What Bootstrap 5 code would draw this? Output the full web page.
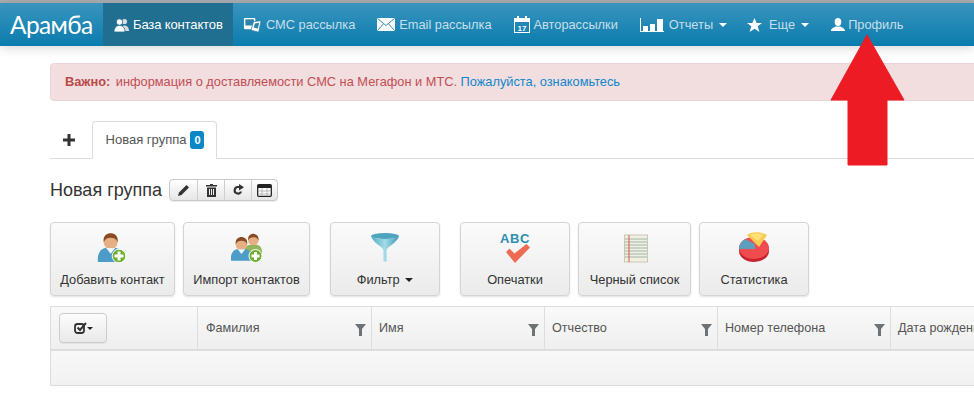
<!doctype html>
<html lang="ru">
<head>
<meta charset="utf-8">
<title>Арамба</title>
<link href="https://cdn.jsdelivr.net/npm/bootstrap@5.3.0/dist/css/bootstrap.min.css" rel="stylesheet">
<style>
html,body{width:974px;height:408px;overflow:hidden}
body{font-family:"Liberation Sans",Arial,sans-serif;font-size:13px;color:#333;background:#fff;position:relative}
.topline{height:3px;background:#a9adb0}
.topbar{height:43px;background:linear-gradient(#3a94bd,#0a7cae);box-shadow:0 2px 10px rgba(0,0,0,.16);padding:0}
.brandname{font-family:Lato,"Liberation Sans",sans-serif;font-size:24.5px;letter-spacing:-.6px;line-height:43px;color:#fff;width:103px;padding-left:10px;font-weight:400;flex:none}
.toplink{height:43px;display:flex;align-items:center;color:#c6dfeb;text-decoration:none;font-size:12.8px;white-space:nowrap;padding:0 10px}
.toplink+.toplink{margin-left:2px}
.toplink.active+.toplink,.toplink+.toplink.tightlink{margin-left:0}
.toplink.active{background:#206e90;color:#fff;width:130px;padding-left:11px;font-size:13px;letter-spacing:-.13px}
.toplink svg{flex:none;display:block}
.nearicon{margin-right:3px}
.widericon{margin-right:5px}
.staricon{margin-right:7px}
.car{display:inline-block;width:0;height:0;border-left:4px solid transparent;border-right:4px solid transparent;border-top:4px solid currentColor}
.toplink .car{color:#fff;margin-left:6px}
.pagebody{padding:17px 0 0 50px;width:1300px}
.notice{height:38px;background:#f2dede;border:1px solid #ebd3d6;border-radius:4px;color:#c14d55;padding:0 14px;line-height:36px;font-size:12.8px;margin:0}
.notice b{color:#b94a48;margin-right:2px}
.notice a{color:#0f87cc;text-decoration:none}
.tabrow{height:38px;margin-top:20px;border-bottom:1px solid #ddd;width:1250px}
.plus{width:38px;height:38px;align-self:flex-end;display:flex;align-items:center;justify-content:center;margin:0 4px -1px 0}
.grouptab{width:125px;height:38px;align-self:flex-end;border:1px solid #ddd;border-bottom-color:#fff;border-radius:4px 4px 0 0;background:#fff;margin-bottom:-1px;display:flex;align-items:center;justify-content:center;gap:4px;font-size:13px;color:#555;padding-left:1px}
.countpill{background:#0b87c7;color:#fff;font-weight:700;font-size:11px;width:14px;height:18px;border-radius:3px;display:flex;align-items:center;justify-content:center}
.titlerow{height:22px;margin-top:20px;gap:7px}
.titletext{font-size:18px;line-height:22px;color:#333}
.toolset{display:flex;height:22px;border:1px solid #c8c8c8;border-radius:4px;background:linear-gradient(#fff,#e6e6e6);box-shadow:0 1px 1px rgba(0,0,0,.08)}
.toolset span{width:27px;display:flex;align-items:center;justify-content:center;border-left:1px solid #cfcfcf}
.toolset span:first-child{border-left:0}
.toolset span:last-child{width:26px}
.bigrow{margin-top:21px;height:74px}
.bigbtn{height:74px;border:1px solid #d4d4d4;border-radius:4px;background:linear-gradient(#fbfbfb,#ebebeb);box-shadow:0 1px 2px rgba(0,0,0,.12);display:flex;flex-direction:column;align-items:center;font-size:12.8px;color:#333;padding:8px 0 0;flex:none}
.bigbtn svg{display:block;height:32px;flex:none}
.bigbtn em{font-style:normal;margin-top:9px;line-height:16px;white-space:nowrap}
.bigbtn .car{color:#222;margin-left:2px;vertical-align:2px}
.gridbox{margin-top:10px;width:1200px;border:1px solid #ddd;border-width:1px 0 1px 1px}
.headline{height:44px;display:flex;background:linear-gradient(#f9f9f9,#efefef);border-bottom:2px solid #ddd}
.headcell{height:42px;width:173px;flex:none;border-right:1px solid #ddd;padding:0 0 0 7px;display:flex;align-items:center;justify-content:space-between;font-size:12.6px;color:#555;white-space:nowrap}
.headcell svg{margin-right:5px;margin-top:3px}
.headcell.firstcell{width:147px;padding-left:8px}
.headcell.firstcell+.headcell{width:174px;padding-left:8px}
.checkbtn{width:48px;height:30px;border:1px solid #ccc;border-radius:4px;background:linear-gradient(#fcfcfc,#e9e9e9);display:flex;align-items:center;justify-content:center;box-shadow:0 1px 1px rgba(0,0,0,.06)}
.checkbtn svg{margin:0}
.checkbtn .car{border-width:3.500px 3.500px 0;color:#222;margin-left:-1px}
.emptyline{height:34px;background:linear-gradient(#f8f8f8,#f1f1f1)}
.redarrow{position:absolute;left:830px;top:33px}
</style>
</head>
<body>
<div class="topline"></div>
<nav class="topbar d-flex position-relative">
  <a class="brandname text-decoration-none" href="#">Арамба</a>
  <a class="toplink active" href="#">
    <svg width="15" height="14" viewBox="0 0 15 14" class="me-1"><circle cx="10.500" cy="3.500" r="2.600" fill="#d5dde0"/><path d="M7 13c0-4 1.500-5.500 3.500-5.500S15 9 15 13z" fill="#d5dde0"/><circle cx="5.500" cy="4" r="3.200" fill="#fff" stroke="#206e90" stroke-width=".8"/><path d="M0 14c0-4.500 2.500-6.500 5.500-6.500S11 9.500 11 14z" fill="#fff" stroke="#206e90" stroke-width=".8"/></svg>
    <span>База контактов</span></a>
  <a class="toplink" href="#">
    <svg width="19" height="18" viewBox="0 0 20 18" class="me-1"><rect x="1" y="1.500" width="12" height="12" rx="1" fill="#fff"/><rect x="2.500" y="3" width="9" height="6.500" fill="#2d84ab"/><path d="M11 5.500l8-1-2.500 12-8-2z" fill="#fff" stroke="#2d84ab" stroke-width=".8"/><path d="M12.500 7.300l4.500-.6-1.300 6-4.500-1z" fill="#2d84ab"/></svg>
    <span>СМС рассылка</span></a>
  <a class="toplink" href="#">
    <svg width="18" height="13" viewBox="0 0 18 13" class="me-1"><rect width="18" height="13" rx=".8" fill="#fff"/><path d="M.5.500L9 7.500 17.500.500M.5 12.500L6.500 5.800M17.500 12.500L11.500 5.800" fill="none" stroke="#1f80aa" stroke-width=".9"/></svg>
    <span>Email рассылка</span></a>
  <a class="toplink" href="#">
    <svg width="16" height="17" viewBox="0 0 16 17" class="me-1"><rect x=".5" y="2.500" width="15" height="14" fill="none" stroke="#fff"/><rect x="1" y="3" width="14" height="3" fill="#fff"/><rect x="3" y="0" width="2" height="4" fill="#fff"/><rect x="11" y="0" width="2" height="4" fill="#fff"/><text x="8" y="14.500" text-anchor="middle" font-size="8" font-weight="700" fill="#fff" font-family="Liberation Sans">17</text></svg>
    <span>Авторассылки</span></a>
  <a class="toplink" href="#">
    <svg width="24" height="14" viewBox="0 0 24 14" class="widericon"><path d="M0 0h1v13h23v1H0z" fill="#fff"/><rect x="3" y="8" width="5" height="5" fill="#fff"/><rect x="10" y="6" width="5" height="7" fill="#fff"/><rect x="17" y="1" width="6" height="12" fill="#fff"/></svg>
    <span>Отчеты</span><i class="car"></i></a>
  <a class="toplink tightlink" href="#">
    <svg width="15" height="14" viewBox="0 0 15 14" class="staricon"><path d="M7.500 0l2.200 5h5.300l-4.300 3.300 1.700 5.700-4.900-3.300-4.900 3.300 1.700-5.700L0 5h5.300z" fill="#fff"/></svg>
    <span>Еще</span><i class="car"></i></a>
  <a class="toplink" href="#">
    <svg width="14" height="13" viewBox="0 0 14 13" class="nearicon"><ellipse cx="7" cy="4" rx="3.300" ry="4" fill="#fff"/><path d="M0 13c0-3 3-3.500 5-4.500h4c2 1 5 1.500 5 4.500z" fill="#fff"/></svg>
    <span>Профиль</span></a>
</nav>

<main class="pagebody">
  <p class="notice"><b>Важно:</b> информация о доставляемости СМС на Мегафон и МТС. <a href="#">Пожалуйста, ознакомьтесь</a></p>

  <div class="tabrow d-flex">
    <div class="plus"><svg width="12" height="12" viewBox="0 0 12 12"><path d="M4.500 0h3v4.500H12v3H7.500V12h-3V7.500H0v-3h4.500z" fill="#333"/></svg></div>
    <div class="grouptab"><span>Новая группа</span><span class="countpill">0</span></div>
  </div>

  <div class="titlerow d-flex align-items-center">
    <span class="titletext">Новая группа</span>
    <div class="toolset">
      <span><svg width="13" height="13" viewBox="0 0 13 13"><path d="M9.500 1l2.500 2.500-7.500 7.500L1 12l1-3.500z" fill="#333"/></svg></span>
      <span><svg width="11" height="13" viewBox="0 0 11 13"><path d="M4 0h3v1h4v1.500H0V1h4zM1 3.500h9V13H1zM3 5v6h1V5zm2 0v6h1V5zm2 0v6h1V5z" fill="#333" fill-rule="evenodd"/></svg></span>
      <span><svg width="13" height="12" viewBox="0 0 13 12"><path d="M10 7.500A4.300 4.300 0 1 1 6 2h1V0l5 3.200-5 3.200V4H6a2.300 2.300 0 1 0 2 3.500z" fill="#333"/></svg></span>
      <span><svg width="15" height="13" viewBox="0 0 15 13"><rect x=".7" y=".7" width="13.600" height="11.600" rx="1" fill="#fff" stroke="#222" stroke-width="1.300"/><rect x="1" y="1" width="13" height="3" fill="#222"/><path d="M1 7h13M1 10h13M5 4v8M10 4v8" stroke="#aaa" stroke-width=".8"/></svg></span>
    </div>
  </div>

  <div class="bigrow d-flex">
    <div class="bigbtn" style="width:125px">
      <svg width="32" height="32" viewBox="0 0 32 32"><g transform="translate(1,1) scale(1.150)"><use href="#person"/></g><circle cx="22" cy="25" r="6.800" fill="#6db02f" stroke="#fff" stroke-width="1"/><path d="M20.500 20.500h3v3h3v3h-3v3h-3v-3h-3v-3h3z" fill="#fff"/></svg>
      <em>Добавить контакт</em>
    </div>
    <div class="bigbtn" style="width:127px;margin-left:8px">
      <svg width="32" height="32" viewBox="0 0 32 32"><g transform="translate(13,2) scale(.85)"><use href="#persongreen"/></g><g transform="translate(0,5) scale(.95)"><use href="#person"/></g><circle cx="24.500" cy="25" r="6.500" fill="#6db02f" stroke="#fff" stroke-width="1"/><path d="M23 21h3v2.500h2.500v3H26V29h-3v-2.500h-2.500v-3H23z" fill="#fff"/></svg>
      <em>Импорт контактов</em>
    </div>
    <div class="bigbtn" style="width:110px;margin-left:20px">
      <svg width="32" height="32" viewBox="0 0 32 32"><defs><linearGradient id="fnl" x1="0" x2="1"><stop offset="0" stop-color="#4fa9c4"/><stop offset=".5" stop-color="#a4dbe8"/><stop offset="1" stop-color="#3c97b5"/></linearGradient>
      <g id="person"><circle cx="11" cy="9" r="6" fill="#e7b084"/><path d="M5 9C4 3 8 1 11 1s7 2 6 8c-1-3-3-4-6-4S6 6 5 9z" fill="#8a4a22"/><path d="M0 26c-1-7 2-11 6-12h10c4 1 6 5 5 12z" fill="#4d9cc8"/><path d="M7 14l4 5 4-5z" fill="#f2f6f8"/></g>
      <g id="persongreen"><circle cx="11" cy="9" r="6" fill="#e7b084"/><path d="M5 9C4 3 8 1 11 1s7 2 6 8c-1-3-3-4-6-4S6 6 5 9z" fill="#8a4a22"/><path d="M0 26c-1-7 2-11 6-12h10c4 1 6 5 5 12z" fill="#93b560"/></g></defs>
      <ellipse cx="16" cy="5" rx="14" ry="3" fill="#4ea3bd"/><path d="M2 5c2 7 11 10 12.500 14v11l3 1V19C19 15 28 12 30 5c-3 4-25 4-28 0z" fill="url(#fnl)"/></svg>
      <em>Фильтр <i class="car"></i></em>
    </div>
    <div class="bigbtn" style="width:110px;margin-left:20px">
      <svg width="32" height="32" viewBox="0 0 32 32"><text x="16" y="12" text-anchor="middle" font-family="Liberation Sans" font-weight="700" font-size="13" letter-spacing=".6" fill="#2e8fb0">ABC</text><path d="M7 21l3.500-3.500 5 5L27.500 13l3.500 3.500L16 32z" fill="#ee6a52"/></svg>
      <em>Опечатки</em>
    </div>
    <div class="bigbtn" style="width:113px;margin-left:8px">
      <svg width="32" height="32" viewBox="0 0 32 32"><rect x="5.500" y="4" width="23" height="27" fill="#f1efe3" stroke="#c9c8b8"/><path d="M6 8h22M6 11h22M6 14h22M6 17h22M6 20h22M6 23h22M6 26h22" stroke="#9fb6a8"/><path d="M10 4v27" stroke="#e5523f"/></svg>
      <em>Черный список</em>
    </div>
    <div class="bigbtn" style="width:110px;margin-left:8px">
      <svg width="32" height="32" viewBox="0 0 32 32"><ellipse cx="16" cy="20" rx="15" ry="11" fill="#c8232c"/><ellipse cx="16" cy="17" rx="15" ry="11" fill="#f04b4f"/><path d="M1 18C1 13 4 10 7 8l10 5v5z" fill="#5f9fbd"/><path d="M9 4c4-3 12-4 20 0l-8 12z" fill="#f8cc52"/><path d="M12 4c4-2 9-2 13 0l-5 6z" fill="#fde07a"/></svg>
      <em>Статистика</em>
    </div>
  </div>

  <div class="gridbox">
    <div class="headline">
      <div class="headcell firstcell"><span class="checkbtn"><svg width="14" height="12" viewBox="0 0 14 12"><rect x="1" y="2" width="9" height="9" rx="2.500" fill="none" stroke="#333" stroke-width="1.800"/><path d="M3.500 5.500l2.500 2.500 6-7" fill="none" stroke="#333" stroke-width="2"/></svg><i class="car"></i></span></div>
      <div class="headcell"><span>Фамилия</span><svg width="11" height="12" viewBox="0 0 11 12"><path d="M0 0h11L7 5v7H4V5z" fill="#6d7277"/></svg></div>
      <div class="headcell"><span>Имя</span><svg width="11" height="12" viewBox="0 0 11 12"><path d="M0 0h11L7 5v7H4V5z" fill="#6d7277"/></svg></div>
      <div class="headcell"><span>Отчество</span><svg width="11" height="12" viewBox="0 0 11 12"><path d="M0 0h11L7 5v7H4V5z" fill="#6d7277"/></svg></div>
      <div class="headcell"><span>Номер телефона</span><svg width="11" height="12" viewBox="0 0 11 12"><path d="M0 0h11L7 5v7H4V5z" fill="#6d7277"/></svg></div>
      <div class="headcell"><span>Дата рождения</span><svg width="11" height="12" viewBox="0 0 11 12"><path d="M0 0h11L7 5v7H4V5z" fill="#6d7277"/></svg></div>
    </div>
    <div class="emptyline"></div>
  </div>
</main>

<svg class="redarrow" width="76" height="133" viewBox="0 0 76 133"><path d="M37 2L74 67H57V132H18V67H1z" fill="#ed1c24" stroke="#ed1c24" stroke-linejoin="round"/></svg>
<script src="https://cdn.jsdelivr.net/npm/bootstrap@5.3.0/dist/js/bootstrap.bundle.min.js"></script>
</body>
</html>
